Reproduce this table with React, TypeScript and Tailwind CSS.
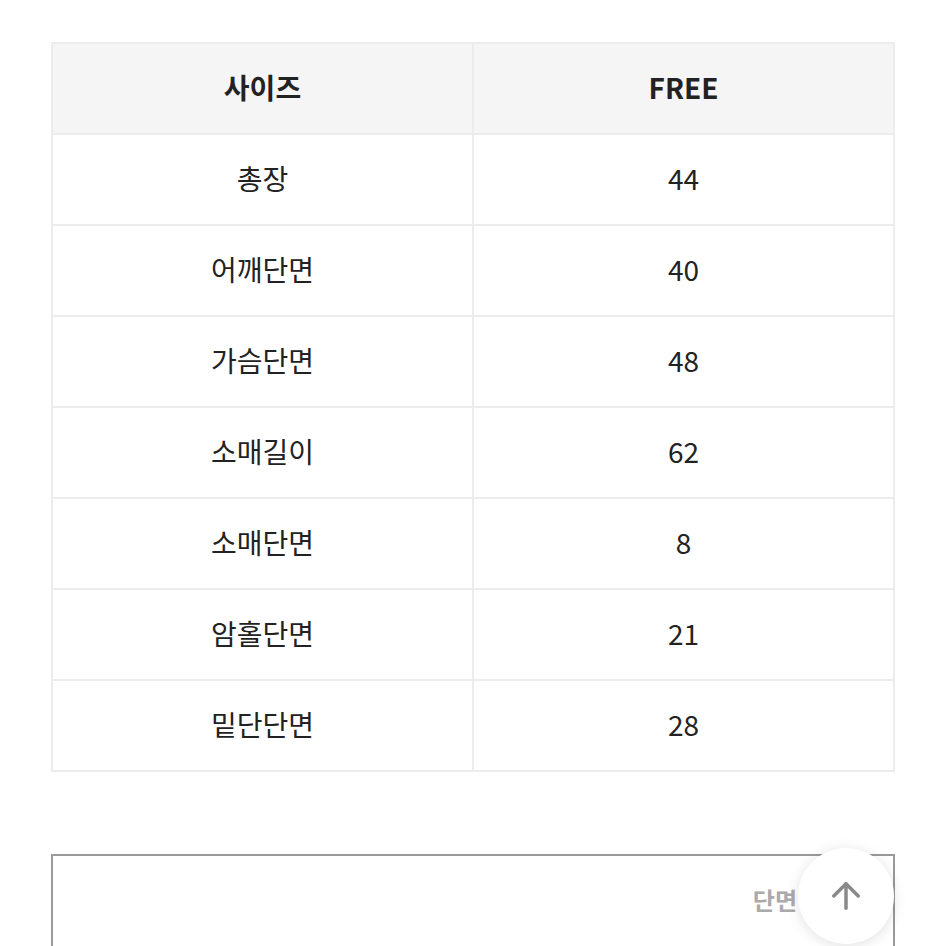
import { ArrowUp } from "lucide-react";

const rows: [string, string][] = [
  ["총장", "44"],
  ["어깨단면", "40"],
  ["가슴단면", "48"],
  ["소매길이", "62"],
  ["소매단면", "8"],
  ["암홀단면", "21"],
  ["밑단단면", "28"],
];

function SizeTable() {
  return (
    <table className="w-full border-collapse table-fixed text-[28px] text-[#222]">
      <thead>
        <tr className="h-[91px] bg-[#f5f5f5]">
          <th className="border-2 border-[#ececec] font-bold pb-1">사이즈</th>
          <th className="border-2 border-[#ececec] font-bold pb-1">FREE</th>
        </tr>
      </thead>
      <tbody>
        {rows.map(([label, value]) => (
          <tr key={label} className="h-[91px]">
            <td className="border-2 border-[#ececec] text-center pb-1">{label}</td>
            <td className="border-2 border-[#ececec] text-center pb-1">{value}</td>
          </tr>
        ))}
      </tbody>
    </table>
  );
}

export default function App() {
  return (
    <div
      className="relative h-[946px] overflow-hidden bg-white px-[51px] pt-[42px]"
      style={{ fontFamily: '"Noto Sans CJK KR", "Noto Sans", sans-serif' }}
    >
      <SizeTable />

      <div className="mt-[82px] h-[200px] border-2 border-[#9a9a9a] flex justify-end pt-[26px] pr-[96px]">
        <span className="text-[24px] font-bold text-[#aaa]">단면</span>
      </div>

      <button className="absolute left-[798px] top-[848px] w-[96px] h-[96px] rounded-full bg-white shadow-[0_2px_14px_rgba(0,0,0,0.12)] flex items-center justify-center">
        <ArrowUp size={42} strokeWidth={2} color="#8a8a8a" />
      </button>
    </div>
  );
}
